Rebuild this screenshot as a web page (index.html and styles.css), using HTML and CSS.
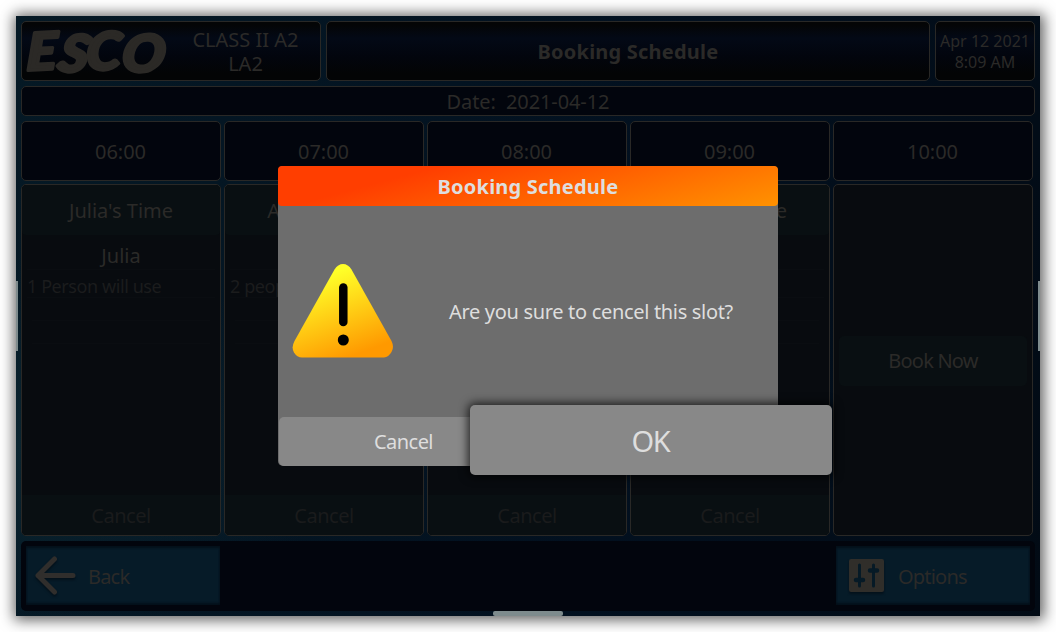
FILE: index.html
```html
<!DOCTYPE html>
<html lang="en">
<head>
<meta charset="utf-8">
<title>Booking Schedule</title>
<link rel="stylesheet" href="styles.css">
</head>
<body>
<main class="screen">
  <header class="top">
    <div class="panel brand">
      <svg class="logo" width="144" height="52" viewBox="0 0 144 52" role="img" aria-label="ESCO">
        <text x="3" y="42" textLength="136" lengthAdjust="spacingAndGlyphs" transform="matrix(1 0 -.1 1.06 3.5 1)" rotate="-3 6 -3 4">ESCO</text>
      </svg>
      <div class="model"><span>CLASS II A2</span><span>LA2</span></div>
    </div>
    <h1 class="panel title">Booking Schedule</h1>
    <div class="panel clock"><span class="day">Apr 12 2021</span><span>8:09 AM</span></div>
  </header>
  <div class="date"><span>Date:&nbsp; 2021-04-12</span></div>
  <section class="grid">
    <div class="hour">06:00</div>
    <div class="hour">07:00</div>
    <div class="hour">08:00</div>
    <div class="hour">09:00</div>
    <div class="hour">10:00</div>
    <article class="slot">
      <div class="name">Julia's Time</div><div class="user">Julia</div><div class="note">1 Person will use</div><div class="rule"></div><div class="rule"></div><div class="drop">Cancel</div>
    </article>
    <article class="slot">
      <div class="name">Anna's Time</div><div class="user"></div><div class="note">2 people will use</div><div class="rule"></div><div class="rule"></div><div class="drop">Cancel</div>
    </article>
    <article class="slot">
      <div class="name"></div><div class="user"></div><div class="note"></div><div class="rule"></div><div class="rule"></div><div class="drop">Cancel</div>
    </article>
    <article class="slot">
      <div class="name">Dana's Time</div><div class="user"></div><div class="note"></div><div class="rule"></div><div class="rule"></div><div class="drop">Cancel</div>
    </article>
    <article class="slot free"><div class="book">Book Now</div></article>
  </section>
  <footer class="bar">
    <div class="btn back">
      <svg width="44" height="44" viewBox="0 0 44 44"><path d="M21.500 5 5 21.500 21.500 38M5 21.500H40" fill="none" stroke="#302e2c" stroke-width="5" stroke-linecap="round" stroke-linejoin="round"/></svg>
      <span>Back</span>
    </div>
    <div class="btn options">
      <svg width="35" height="34" viewBox="0 0 35 34"><rect width="35" height="33" rx="2" fill="#302e2a"/><path d="M10.500 6V27M24.500 6V27" stroke="#061a26" stroke-width="3" stroke-linecap="round"/><path d="M7 21H14M21 11.500H28" stroke="#061a26" stroke-width="4.500" stroke-linecap="round"/></svg>
      <span>Options</span>
    </div>
  </footer>
  <i class="handle left"></i><i class="handle right"></i><i class="handle bottom"></i>
  <section class="dialog">
    <h2 class="dialog-title">Booking Schedule</h2>
    <div class="dialog-body">
      <svg width="102" height="96" viewBox="0 0 102 96">
        <defs><linearGradient id="warn" x1=".3" y1="0" x2=".7" y2="1"><stop offset=".12" stop-color="#ffff28"/><stop offset=".95" stop-color="#ff9900"/></linearGradient></defs>
        <path d="M42.500 6.500Q46 1 51 1T59.500 6.500L99.500 78Q102.500 84 99.500 89T92 94.500H10Q5 94.500 2 89.500T2.500 78Z" fill="url(#warn)"/>
        <path d="M51.300 24.500V59" stroke="#000" stroke-width="8.500" stroke-linecap="round"/><circle cx="51.300" cy="77" r="5.500"/>
      </svg>
      <p>Are you sure to cencel this slot?</p>
    </div>
    <div class="dialog-cancel">Cancel</div>
    <div class="dialog-ok">OK</div>
  </section>
</main>
</body>
</html>
```
FILE: styles.css
```css
* { box-sizing: border-box; }
body { margin: 0; padding: 16px; width: 1056px; height: 632px; overflow: hidden; background: #fff; font-family: "Noto Sans", sans-serif; font-size: 20px; line-height: 24px; color: #2b2a28; }
h1, h2, p { margin: 0; }
.screen { position: relative; display: flex; flex-direction: column; width: 1024px; height: 600px; padding: 5px; gap: 5px;
  background: radial-gradient(ellipse 330px 190px at 0 430px, #0b2530, transparent), linear-gradient(100deg, #051925, #02101f 60%, #020b15);
  box-shadow: 1px 1px 13px 3px rgba(0,0,0,.62); }
.top { display: flex; gap: 5px; height: 60px; }
.panel { display: flex; border: 1px solid #292826; border-radius: 5px; background: linear-gradient(#040506 5%, #030916 28%, #02050d 60%, #030405 88%); }
.brand { width: 300px; }
.logo { flex: none; margin: 3px 0 0 2px; overflow: visible; }
.logo text { font: italic 900 49px Lato, sans-serif; fill: #2b2926; stroke: #2b2926; stroke-width: 3px; stroke-linejoin: round; }
.model { display: flex; flex-direction: column; align-items: center; width: 156px; margin-left: 3px; padding-top: 6px; white-space: nowrap; }
.title { width: 604px; align-items: center; justify-content: center; padding-top: 2px; font: bold 20px/24px "Noto Sans", sans-serif; letter-spacing: .22px; }
.clock { width: 100px; flex-direction: column; align-items: center; padding-top: 9px; font-size: 16px; line-height: 21px; white-space: nowrap; }
.date { display: flex; align-items: center; justify-content: center; width: 1014px; height: 30px; padding-top: 2px; letter-spacing: -.1px; border: 1px solid #292826; border-radius: 5px; background: #02050d; }
.grid { display: grid; grid-template: 60px 352px / repeat(5, 200px); gap: 3px; }
.hour { display: flex; align-items: center; justify-content: center; padding: 2px 1px 0 0; border: 1px solid #292826; border-radius: 5px; background: #02050d; }
.slot { display: flex; flex-direction: column; align-items: stretch; border: 1px solid #292826; border-radius: 5px; background: #080b0f; text-align: center; overflow: hidden; }
.name { height: 50px; padding-top: 14px; background: #090f12; border-radius: 4px; }
.user { height: 35px; margin: 0 5px; padding-top: 9px; border-bottom: 1px solid #0a0d11; }
.note { height: 28px; margin: 0 5px; font-size: 18px; line-height: 33px; letter-spacing: -.42px; text-align: left; color: #1b1c1d; white-space: nowrap; border-bottom: 1px solid #0a0d11; }
.rule { height: 23px; margin: 0 10px; border-bottom: 1px solid #0a0d11; }
.drop { height: 40px; margin-top: auto; padding-top: 9px; background: #090f12; color: #1a1b1c; letter-spacing: -.5px; }
.free { justify-content: center; }
.book { height: 50px; margin: 2px 5px 0; padding-top: 13px; background: #090f12; border-radius: 5px; letter-spacing: -.8px; }
.bar { display: flex; justify-content: space-between; width: 1014px; height: 70px; padding: 5px; border-radius: 5px; background: #02050d; }
.btn { display: flex; align-items: center; width: 194px; height: 59px; background: #061b28; box-shadow: inset 0 2px 2px #04101a, inset 0 -2px 2px #04101a; letter-spacing: -.8px; }
.btn svg { filter: drop-shadow(0 2px 1px #03101a); }
.btn span { padding-top: 2px; }
.back { padding-left: 7px; gap: 11px; }
.options { padding-left: 13px; gap: 14px; }
.handle { position: absolute; background: #7e8b8d; }
.left { left: 0; top: 265px; width: 2px; height: 70px; }
.right { right: 0; top: 265px; width: 2px; height: 70px; }
.bottom { left: 477px; bottom: 0; width: 70px; height: 5px; border-radius: 2px; }
.dialog { position: absolute; left: 262px; top: 150px; display: flex; flex-direction: column; width: 500px; height: 300px; background: #6d6d6d; border-radius: 5px; color: #dedede; }
.dialog-title { height: 40px; border-radius: 4px; background: linear-gradient(165deg, #ff3e00 25%, #ff9200); text-align: center; font: bold 20px/41px "Noto Sans", sans-serif; letter-spacing: .22px; }
.dialog-body { display: flex; align-items: center; height: 211px; padding-left: 14px; }
.dialog-body svg { flex: none; margin-top: -1px; }
.dialog-body p { flex: none; width: 394px; text-align: center; letter-spacing: -.32px; }
.dialog-cancel { height: 49px; margin-left: 1px; padding-right: 250px; border-radius: 5px; background: #888; line-height: 49px; text-align: center; letter-spacing: -.55px; }
.dialog-ok { position: absolute; left: 192px; top: 239px; width: 362px; height: 70px; padding-right: 1px; border-radius: 5px; background: #888; box-shadow: 0 0 10px 2px rgba(0,0,0,.75); font-size: 29px; line-height: 72px; letter-spacing: -1.4px; text-align: center; }
```
